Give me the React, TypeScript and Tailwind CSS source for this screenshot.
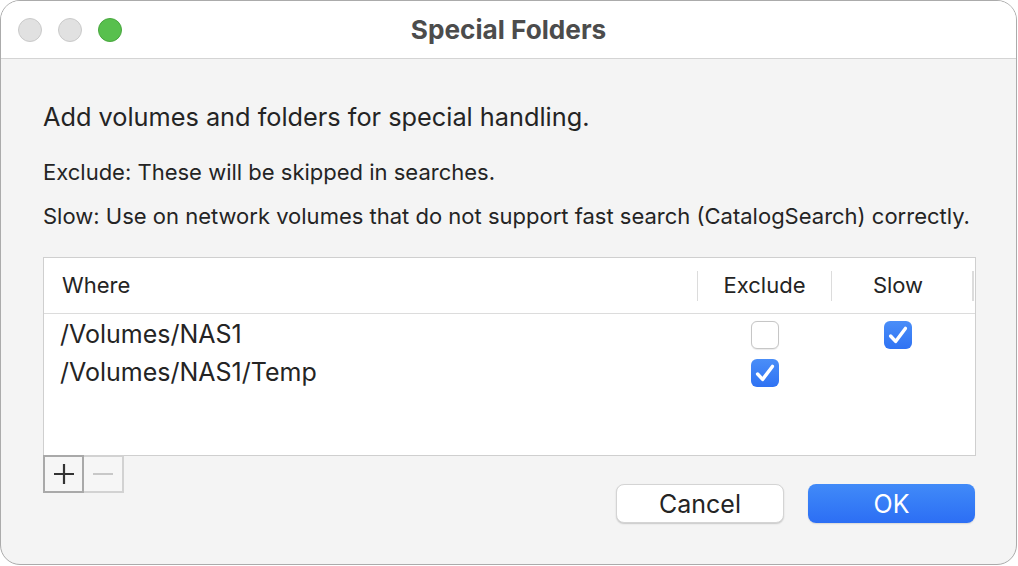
import React from "react";

const font = { fontFamily: "Inter, 'Liberation Sans', sans-serif" };

function Check({ checked }: { checked: boolean }) {
  if (!checked)
    return (
      <div className="w-[28px] h-[28px] rounded-[6px] bg-white border border-[#c6c6c6] shadow-[0_0.5px_1px_rgba(0,0,0,0.08)]" />
    );
  return (
    <div className="w-[28px] h-[28px] rounded-[6px] bg-gradient-to-b from-[#4a8ef8] to-[#2f72f3] flex items-center justify-center">
      <svg width="22" height="22" viewBox="0 0 22 22" fill="none">
        <path d="M3.6 12 L8.6 17.4 L18.4 4.4" stroke="white" strokeWidth="3.4" strokeLinecap="round" strokeLinejoin="round" />
      </svg>
    </div>
  );
}

export default function App() {
  const rows = [
    { path: "/Volumes/NAS1", exclude: false, slow: true },
    { path: "/Volumes/NAS1/Temp", exclude: true, slow: null as boolean | null },
  ];
  return (
    <div className="w-[1018px] h-[566px] bg-white" style={font}>
      <div className="w-[1017px] h-[565px] rounded-[20px] border border-[#ababab] overflow-hidden flex flex-col bg-[#f4f4f4]">
        {/* title bar */}
        <div className="h-[58px] bg-white border-b border-[#d4d4d4] grid grid-cols-[1fr_auto_1fr] items-center shrink-0">
          <div className="flex items-center gap-[16px] pl-[17px]">
            <div className="w-[24px] h-[24px] rounded-full bg-[#e1e1e1] border border-[#c9c9c9]" />
            <div className="w-[24px] h-[24px] rounded-full bg-[#e1e1e1] border border-[#c9c9c9]" />
            <div className="w-[24px] h-[24px] rounded-full bg-[#58c04d] border border-[#48a63e]" />
          </div>
          <div className="text-[26.2px] leading-[30px] font-bold text-[#4c4c4c]">Special Folders</div>
          <div />
        </div>
        {/* body */}
        <div className="flex-1 flex flex-col pl-[42px] pr-[41px] pt-[44px] text-[#242424]">
          <div className="text-[25.3px] leading-[28px] whitespace-nowrap">Add volumes and folders for special handling.</div>
          <div className="text-[22px] leading-[26px] mt-[28px] whitespace-nowrap">Exclude: These will be skipped in searches.</div>
          <div className="text-[22px] leading-[26px] mt-[18px] whitespace-nowrap">
            Slow: Use on network volumes that do not support fast search (CatalogSearch) correctly.
          </div>
          {/* table */}
          <div className="mt-[28px] w-[933px] h-[199px] border border-[#cfcfcf] bg-white flex flex-col shrink-0">
            <div className="h-[56px] border-b border-[#dcdcdc] flex items-center text-[22px] text-[#242424] shrink-0">
              <div className="w-[653px] pl-[18px]">Where</div>
              <div className="w-[1px] h-[30px] bg-[#dcdcdc]" />
              <div className="w-[133px] text-center">Exclude</div>
              <div className="w-[1px] h-[30px] bg-[#dcdcdc]" />
              <div className="w-[132px] text-center">Slow</div>
              <div className="w-[8px]" />
              <div className="w-[2px] h-[30px] bg-[#dcdcdc]" />
            </div>
            <div className="pt-[2px]">
              {rows.map((r) => (
                <div key={r.path} className="h-[38px] flex items-center text-[25px] text-[#242424]">
                  <div className="w-[654px] pl-[16px]">{r.path}</div>
                  <div className="w-[134px] flex justify-center">
                    <Check checked={r.exclude} />
                  </div>
                  <div className="w-[132px] flex justify-center">
                    {r.slow !== null && <Check checked={!!r.slow} />}
                  </div>
                </div>
              ))}
            </div>
          </div>
          {/* bottom */}
          <div className="flex justify-between">
            <div className="flex -mt-[1px]">
              <div className="w-[41px] h-[38px] border-2 border-[#a9a9a9] bg-[#f6f6f6] flex items-center justify-center">
                <svg width="22" height="22" viewBox="0 0 22 22">
                  <path d="M11 1 V21 M1 11 H21" stroke="#333" strokeWidth="2.2" />
                </svg>
              </div>
              <div className="w-[40px] h-[38px] border-2 border-l-0 border-[#d2d2d2] bg-[#f6f6f6] flex items-center justify-center">
                <svg width="22" height="22" viewBox="0 0 22 22">
                  <path d="M1 11 H21" stroke="#c8c8c8" strokeWidth="2" />
                </svg>
              </div>
            </div>
            <div className="flex gap-[24px] mt-[28px]">
              <button className="w-[168px] h-[39px] rounded-[8px] bg-white border border-[#d4d4d4] shadow-[0_1px_1.5px_rgba(0,0,0,0.18)] text-[25px] leading-[30px] text-[#242424]">
                Cancel
              </button>
              <button className="w-[167px] h-[39px] rounded-[8px] bg-gradient-to-b from-[#418af8] to-[#2c6ef4] text-[25px] leading-[30px] text-white shadow-[0_1px_1.5px_rgba(0,0,0,0.12)]">
                OK
              </button>
            </div>
          </div>
        </div>
      </div>
    </div>
  );
}
